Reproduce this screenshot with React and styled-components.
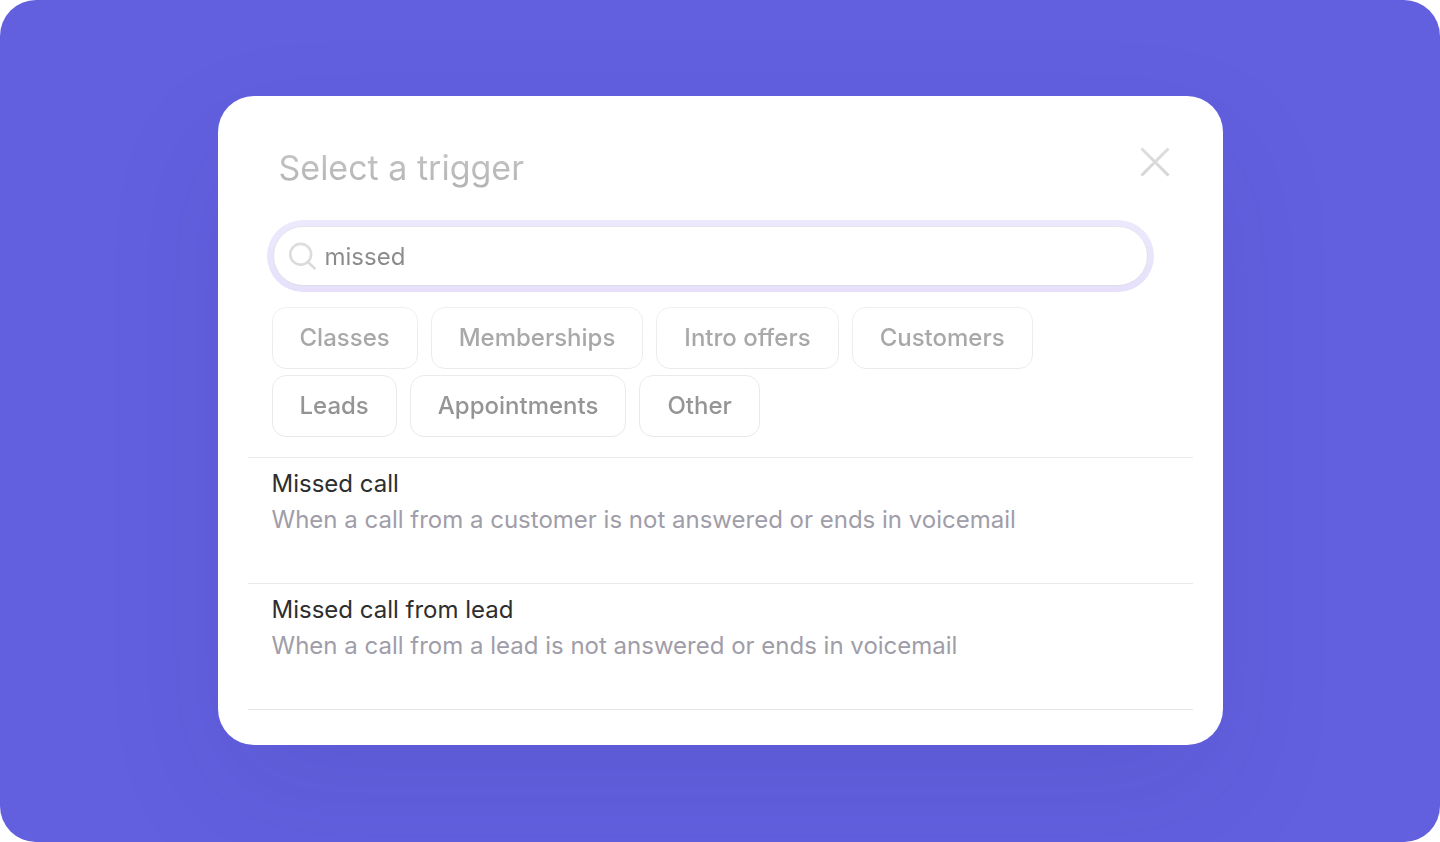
import React, { useState } from "react";
import styled, { createGlobalStyle } from "styled-components";

const GlobalStyle = createGlobalStyle`
   * {
      box-sizing: border-box;
   }

   body {
      margin: 0;
      background: #fff;
      font-family: Inter, "Liberation Sans", sans-serif;
   }
`;

const Stage = styled.main`
   display: flex;
   align-items: flex-start;
   justify-content: center;
   min-height: 100vh;
   padding: 96px 24px;
   border-radius: 36px;
   background-color: #6360e0;
   overflow: hidden;
`;

const Card = styled.section`
   width: 100%;
   max-width: 1005px;
   padding: 0 30px 35px;
   border-radius: 36px;
   background-color: #fff;
   box-shadow: 0 48px 120px rgba(40, 36, 110, 0.1);
`;

// The upper part of the dialog fades towards the top
const FadedTop = styled.div`
   padding: 46px 18px 20px;
   mask-image: linear-gradient(rgba(0, 0, 0, 0.14), #000);
`;

const Header = styled.header`
   display: flex;
   align-items: flex-start;
   justify-content: space-between;
   padding: 0 0 0 13px;
`;

const Title = styled.h1`
   margin: 5px 0 0;
   font-size: 34px;
   font-weight: 400;
   line-height: 42px;
   color: #2b2b2b;
`;

const CloseButton = styled.button`
   display: flex;
   padding: 3px;
   border: 0;
   background: none;
   color: #808080;
   cursor: pointer;
`;

const SearchBox = styled.label`
   display: flex;
   align-items: center;
   gap: 8px;
   height: 60px;
   margin: 37px 27px 0 7px;
   padding: 0 16px 0 15px;
   border: 1px solid #c8c5d4;
   border-radius: 30px;
   background-color: #fff;
   color: #bcbcbe;
   box-shadow: 0 0 0 6px #d6ccf8;
`;

const SearchInput = styled.input`
   flex: 1;
   min-width: 0;
   height: 36px;
   padding: 1px 0 0;
   border: 0;
   outline: 0;
   background: none;
   font-family: inherit;
   font-size: 24px;
   font-weight: 400;
   color: #242424;
`;

const Filters = styled.div`
   display: flex;
   flex-wrap: wrap;
   gap: 6px 13px;
   margin: 21px 120px 0 6px;
`;

const FilterButton = styled.button`
   height: 62px;
   padding: 0 27px 2px;
   border: 1px solid #e6e6e6;
   border-radius: 14px;
   background: none;
   font-family: inherit;
   font-size: 24px;
   font-weight: 500;
   color: #868686;
   cursor: pointer;
`;

const TriggerList = styled.ul`
   margin: 0;
   padding: 0;
   list-style: none;
   border-bottom: 1px solid #e6e6e6;
`;

const TriggerItem = styled.li`
   padding: 8px 24px 45px;
   border-top: 1px solid #e9e9eb;
   font-size: 24px;
   font-weight: 400;
   line-height: 36px;
`;

const TriggerName = styled.h2`
   margin: 0;
   font-size: inherit;
   font-weight: inherit;
   color: #2e2e2e;
`;

const TriggerText = styled.p`
   margin: 0;
   color: #9f9da8;
`;

const filters = [
   "Classes",
   "Memberships",
   "Intro offers",
   "Customers",
   "Leads",
   "Appointments",
   "Other",
];

const triggers = [
   {
      name: "Missed call",
      text: "When a call from a customer is not answered or ends in voicemail",
   },
   {
      name: "Missed call from lead",
      text: "When a call from a lead is not answered or ends in voicemail",
   },
];

const CloseIcon = () => (
   <svg width="34" height="34" viewBox="0 0 34 34" fill="none" aria-hidden="true">
      <path d="M3.5 3.5L30.5 30.5M30.5 3.5L3.5 30.5" stroke="currentColor" strokeWidth="3" />
   </svg>
);

const SearchIcon = () => (
   <svg width="28" height="28" viewBox="0 0 28 28" fill="none" aria-hidden="true">
      <circle cx="11.7" cy="12.3" r="10.4" stroke="currentColor" strokeWidth="2.6" />
      <path
         d="M19 20L25.6 26.4"
         stroke="currentColor"
         strokeWidth="2.6"
         strokeLinecap="round"
      />
   </svg>
);

const App = () => {
   const [query, setQuery] = useState("missed");

   return (
      <>
         <GlobalStyle />
         <Stage>
            <Card>
               <FadedTop>
                  <Header>
                     <Title>Select a trigger</Title>
                     <CloseButton type="button" aria-label="Close">
                        <CloseIcon />
                     </CloseButton>
                  </Header>
                  <SearchBox>
                     <SearchIcon />
                     <SearchInput
                        type="text"
                        aria-label="Search triggers"
                        value={query}
                        onChange={(e) => setQuery(e.target.value)}
                     />
                  </SearchBox>
                  <Filters>
                     {filters.map((filter) => (
                        <FilterButton key={filter} type="button">
                           {filter}
                        </FilterButton>
                     ))}
                  </Filters>
               </FadedTop>
               <TriggerList>
                  {triggers.map(({ name, text }) => (
                     <TriggerItem key={name}>
                        <TriggerName>{name}</TriggerName>
                        <TriggerText>{text}</TriggerText>
                     </TriggerItem>
                  ))}
               </TriggerList>
            </Card>
         </Stage>
      </>
   );
};

export default App;
